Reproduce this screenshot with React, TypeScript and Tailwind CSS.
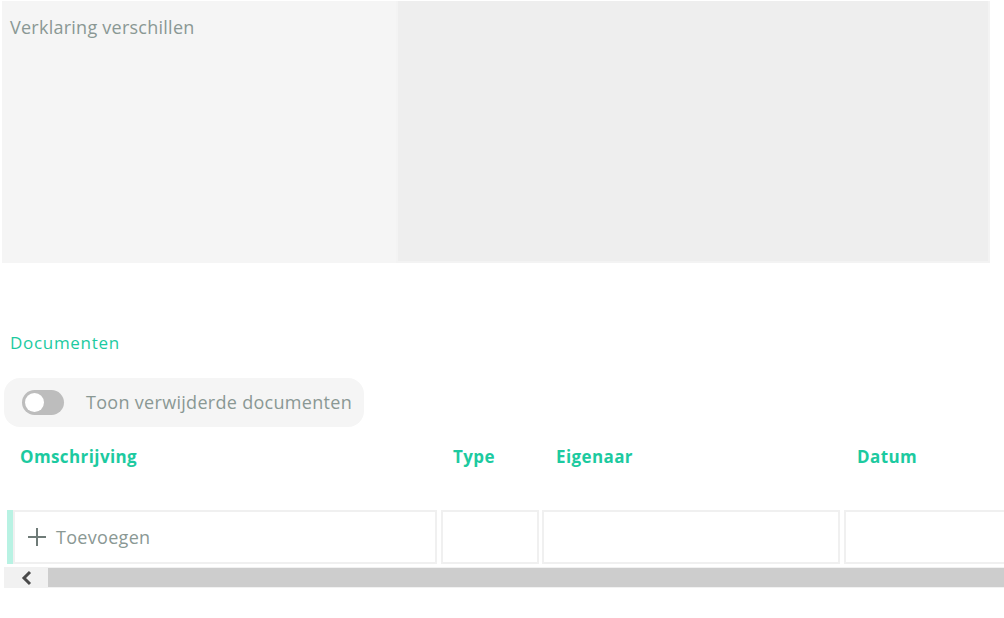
import React from "react";

const font = { fontFamily: '"Open Sans", "Noto Sans", sans-serif' };

export default function App() {
  return (
    <div className="w-[1004px] h-[618px] bg-white overflow-hidden" style={font}>
      <div className="flex pt-px pl-[2px] h-[263px]">
        <div className="w-[394px] bg-[#f5f5f5] px-2 pt-[13px] text-[18px] tracking-[0.25px] text-[#8a9894]">
          Verklaring verschillen
        </div>
        <div className="w-[594px] bg-[#eeeeee] border-l-2 border-b-2 border-r-2 border-[#f3f3f3]" />
      </div>

      <div className="pl-[10px] pt-[68px] text-[17px] tracking-[0.7px] text-[#1ccaa0] leading-[24px]">Documenten</div>

      <div className="ml-1 mt-[23px] w-[360px] h-[49px] rounded-2xl bg-[#f5f5f5] flex items-center pl-[18px]">
        <div className="w-[42px] h-[25px] rounded-full bg-[#bdbdbd] flex items-center pl-[3px]">
          <div className="w-[19px] h-[19px] rounded-full bg-white" />
        </div>
        <span className="ml-[22px] text-[18px] tracking-[0.3px] text-[#8a9894]">Toon verwijderde documenten</span>
      </div>

      <div className="flex mt-[17px] h-[26px] items-center font-bold text-[17px] tracking-[0.4px] text-[#1ccaa0]">
        <div className="w-[453px] pl-5">Omschrijving</div>
        <div className="w-[103px]">Type</div>
        <div className="w-[301px]">Eigenaar</div>
        <div>Datum</div>
      </div>

      <div className="mt-[40px] ml-[7px] flex h-[54px]">
        <div className="w-[6px] bg-[#b8f2e3]" />
        <div className="w-[424px] border-2 border-[#f0f0f0] flex items-center pl-3 text-[18px] tracking-[0.3px] text-[#8a9894]">
          <svg width="20" height="20" viewBox="0 0 20 20" className="mr-[9px]">
            <path d="M10 1v18M1 10h18" stroke="#6f7b78" strokeWidth="2" />
          </svg>
          Toevoegen
        </div>
        <div className="w-[98px] ml-1 border-2 border-[#f0f0f0]" />
        <div className="w-[298px] ml-[3px] border-2 border-[#f0f0f0]" />
        <div className="flex-1 ml-1 border-2 border-r-0 border-[#f0f0f0]" />
      </div>

      <div className="ml-1 mt-[3px] h-[21px] flex bg-[#f1f1f1]">
        <div className="w-[44px] flex items-center justify-center">
          <svg width="14" height="16" viewBox="0 0 14 16">
            <path d="M11 2L5 8l6 6" stroke="#4a4a4a" strokeWidth="3" fill="none" />
          </svg>
        </div>
        <div className="flex-1 my-[1px] bg-[#cdcdcd]" />
      </div>
    </div>
  );
}
